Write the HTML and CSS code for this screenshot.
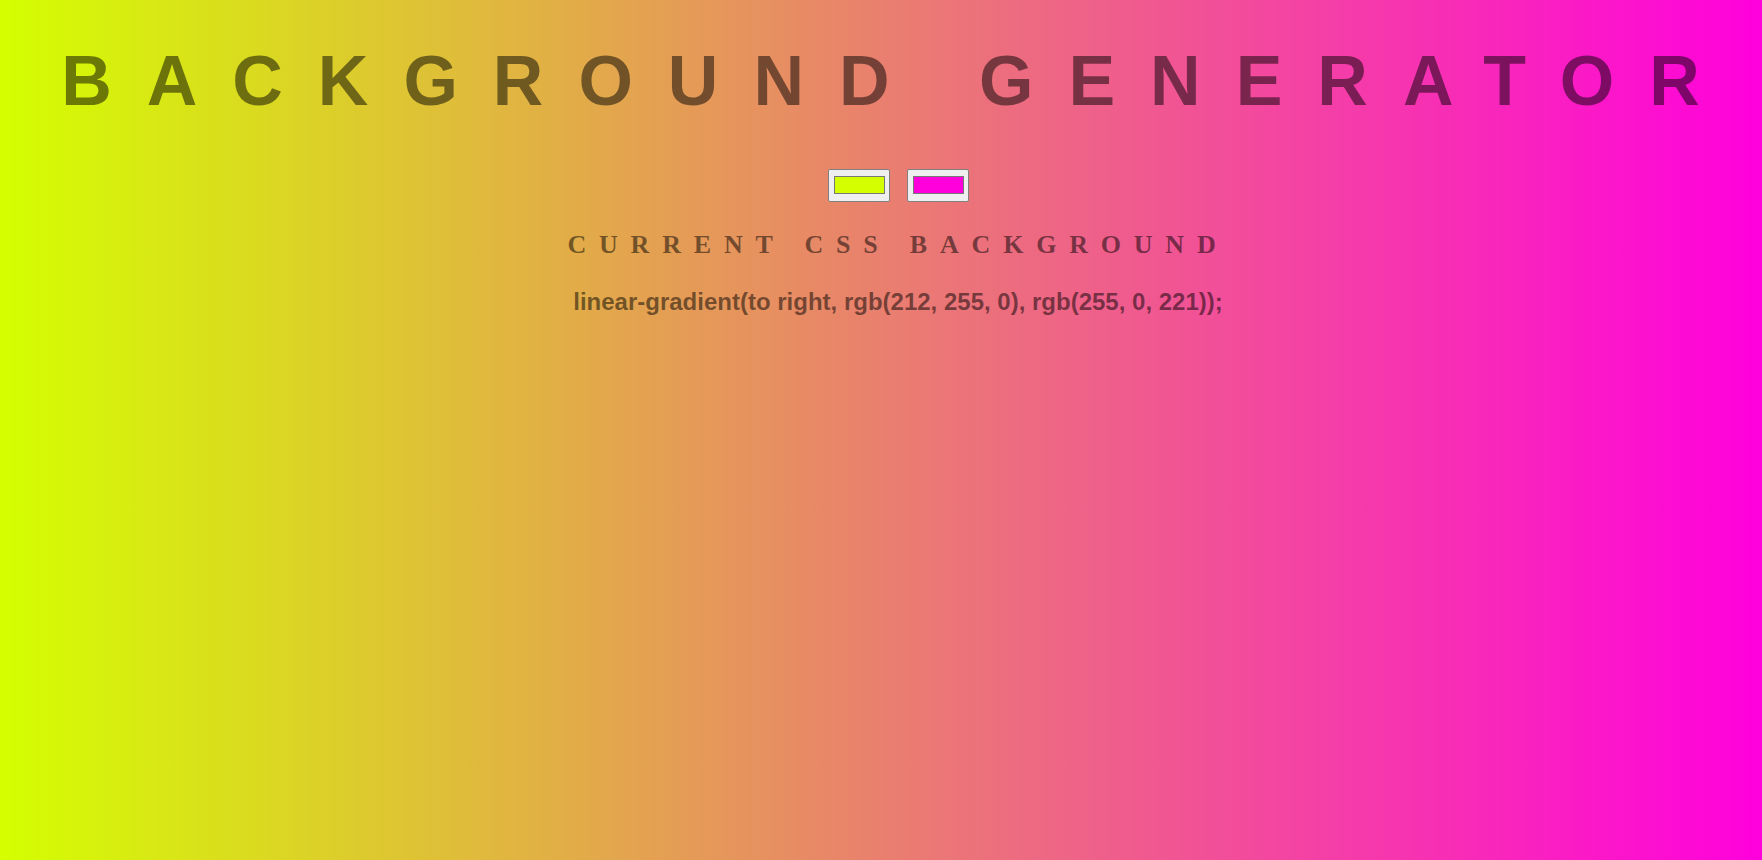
FILE: index.html
```html
<!DOCTYPE html>
<html lang="en">
<head>
<meta charset="utf-8">
<title>Background Generator</title>
<link rel="stylesheet" href="styles.css">
</head>
<body class="page">
  <h1 class="title">Background Generator</h1>
  <div class="pickers">
    <input class="swatch" type="color" name="color1" value="#d4ff00">
    <input class="swatch" type="color" name="color2" value="#ff00dd">
  </div>
  <h3 class="subtitle">Current CSS Background</h3>
  <p class="css-output">linear-gradient(to right, rgb(212, 255, 0), rgb(255, 0, 221));</p>
</body>
</html>
```

FILE: styles.css
```css
html {
  height: 100%;
}

.page {
  margin: 0;
  min-height: 100%;
  box-sizing: border-box;
  padding: 41px 0 0 34px;
  background: linear-gradient(to right, rgb(212, 255, 0), rgb(255, 0, 221));
  color: rgba(0, 0, 0, 0.5);
  text-align: center;
}

.title {
  margin: 0;
  font-family: "Liberation Sans", Arial, sans-serif;
  font-weight: 700;
  font-size: 70px;
  line-height: 80px;
  letter-spacing: 35px;
  text-transform: uppercase;
  white-space: nowrap;
}

.pickers {
  display: flex;
  justify-content: center;
  gap: 17px;
  margin-top: 48px;
}

.swatch {
  -webkit-appearance: none;
  appearance: none;
  box-sizing: border-box;
  width: 62px;
  height: 33px;
  margin: 0;
  padding: 6px 4px 7px 5px;
  border: 1px solid #808080;
  border-radius: 2px;
  background: #efefef;
  cursor: pointer;
}

.swatch::-webkit-color-swatch-wrapper {
  padding: 0;
}

.swatch::-webkit-color-swatch {
  border: 1px solid #777777;
  border-radius: 0;
}

.subtitle {
  margin: 28px 0 0;
  font-family: "Liberation Serif", "Times New Roman", serif;
  font-weight: 700;
  font-size: 26px;
  line-height: 30px;
  letter-spacing: 12.8px;
  text-transform: uppercase;
}

.css-output {
  margin: 27.5px 0 0;
  font-family: "Liberation Sans", Arial, sans-serif;
  font-weight: 700;
  font-size: 24px;
  line-height: 28px;
}
```
